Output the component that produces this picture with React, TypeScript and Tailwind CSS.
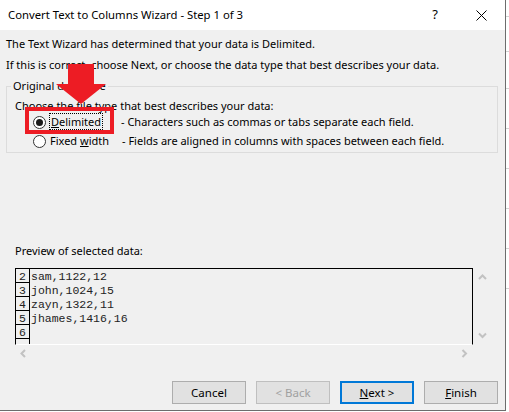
const rows = [
  { n: "2", text: "sam,1122,12" },
  { n: "3", text: "john,1024,15" },
  { n: "4", text: "zayn,1322,11" },
  { n: "5", text: "jhames,1416,16" },
  { n: "6", text: "" },
];

const Chevron = ({ dir }: { dir: "up" | "down" | "left" | "right" }) => {
  const d = {
    up: "M1 5 L4.5 1.5 L8 5",
    down: "M1 1.5 L4.5 5 L8 1.5",
    left: "M5 1 L1.5 4.5 L5 8",
    right: "M1.5 1 L5 4.5 L1.5 8",
  }[dir];
  const vertical = dir === "up" || dir === "down";
  return (
    <svg
      width={vertical ? 9 : 7}
      height={vertical ? 7 : 9}
      viewBox={vertical ? "0 0 9 7" : "0 0 7 9"}
      fill="none"
      stroke="#c2c2c2"
      strokeWidth="2"
    >
      <path d={d} />
    </svg>
  );
};

const Radio = ({ checked }: { checked?: boolean }) => (
  <span className="flex h-[13px] w-[13px] items-center justify-center rounded-full border border-[#333333] bg-white">
    {checked && <span className="h-[7px] w-[7px] rounded-full bg-[#1a1a1a]" />}
  </span>
);

const Button = ({
  children,
  disabled,
  focused,
}: {
  children: React.ReactNode;
  disabled?: boolean;
  focused?: boolean;
}) => (
  <button
    className={
      focused
        ? "flex h-[23px] w-[74px] items-center justify-center border-2 border-[#0078d7] bg-[#e1e1e1] text-[11.5px] text-[#000]"
        : disabled
          ? "flex h-[23px] w-[74px] items-center justify-center border border-[#bfbfbf] bg-[#e1e1e1] text-[11.5px] text-[#a0a0a0]"
          : "flex h-[23px] w-[74px] items-center justify-center border border-[#adadad] bg-[#e1e1e1] text-[11.5px] text-[#000]"
    }
  >
    {children}
  </button>
);

export default function App() {
  return (
    <div
      className="relative flex h-[412px] w-[509px] flex-col overflow-hidden bg-white text-[11px] text-black"
      style={{ fontFamily: '"Noto Sans", sans-serif' }}
    >
      <div className="flex">
        {/* dialog */}
        <div className="flex h-[411px] w-[506px] flex-col border-r border-b border-[#6d6d6d] bg-[#f0f0f0]">
          <div className="flex h-[30px] items-center bg-white pl-[8px]">
            <span className="text-[11.3px] leading-[16px]">Convert Text to Columns Wizard - Step 1 of 3</span>
            <span className="mr-[38px] ml-auto text-[13px]">?</span>
            <svg width="11" height="11" viewBox="0 0 11 11" className="mr-[18px]" stroke="#000" strokeWidth="1">
              <path d="M0.5 0.5 L10.5 10.5 M10.5 0.5 L0.5 10.5" />
            </svg>
          </div>

          <div className="flex flex-col px-[6px]">
            <p className="pt-[5px] leading-[18px]">The Text Wizard has determined that your data is Delimited.</p>
            <p className="mt-[3px] leading-[18px]">
              If this is correct, choose Next, or choose the data type that best describes your data.
            </p>

            <div className="relative mt-[12px] w-[492px] border border-[#dcdcdc] px-[8px] pt-[11px] pb-[3px]">
              <span className="absolute -top-[9px] left-[4px] bg-[#f0f0f0] px-[2px] leading-[16px]">
                Original data type
              </span>
              <p className="leading-[16px]">Choose the file type that best describes your data:</p>
              <div className="flex h-[16px] items-center pl-[18px]">
                <Radio checked />
                <span className="ml-[3px] w-[72px]">
                  <span className="border border-dotted border-black px-[1px] leading-[12px]">
                    <span className="underline">D</span>elimited
                  </span>
                </span>
                <span>- Characters such as commas or tabs separate each field.</span>
              </div>
              <div className="mt-[3px] flex h-[16px] items-center pl-[18px]">
                <Radio />
                <span className="ml-[4px] w-[72px]">
                  Fixed <span className="underline">w</span>idth
                </span>
                <span>- Fields are aligned in columns with spaces between each field.</span>
              </div>
            </div>

            <p className="mt-[90px] pl-[9px] leading-[16px]">Preview of selected data:</p>

            <div className="mt-[9px] ml-[9px] flex flex-col">
              <div className="flex">
                <div
                  className="h-[77px] w-[458px] overflow-hidden border-t border-r border-b border-l border-black border-b-white text-[11.5px] text-[#222]"
                  style={{ fontFamily: '"Liberation Mono", monospace' }}
                >
                  {rows.map((r) => (
                    <div key={r.n} className="flex h-[14px]">
                      <span className="h-[14px] w-[14px] border-r border-b border-black pt-[2px] text-center leading-[12px]">
                        {r.n}
                      </span>
                      <span className="pt-[2px] pl-[1px] leading-[12px]">{r.text}</span>
                    </div>
                  ))}
                  <div className="h-[10px] w-[14px] border-r border-black" />
                </div>
                <div className="flex w-[18px] flex-col items-center justify-between pt-[6px] pb-[6px]">
                  <Chevron dir="up" />
                  <Chevron dir="down" />
                </div>
              </div>
              <div className="flex h-[16px] w-[458px] items-center justify-between px-[5px]">
                <Chevron dir="left" />
                <Chevron dir="right" />
              </div>
            </div>
          </div>

          <div className="mt-auto flex justify-end gap-[10px] pr-[7px] pb-[6px]">
            <Button>Cancel</Button>
            <Button disabled>&lt; Back</Button>
            <Button focused>
              <span>
                <span className="underline">N</span>ext &gt;
              </span>
            </Button>
            <Button>
              <span>
                <span className="underline">F</span>inish
              </span>
            </Button>
          </div>
        </div>

        {/* spreadsheet behind the dialog */}
        <div className="flex flex-1 flex-col">
          <div className="h-[17px] border-b border-[#d4d4d4]" />
          <div className="h-[35px] border-b border-[#d4d4d4]" />
          <div className="h-[37px] border-b border-[#d4d4d4]" />
          <div className="h-[40px] border-b border-[#d4d4d4]" />
          <div className="h-[40px] border-b border-[#d4d4d4]" />
          <div className="h-[40px] border-b border-[#d4d4d4]" />
          <div className="h-[40px] border-b border-[#d4d4d4]" />
          <div className="h-[40px] border-b border-[#d4d4d4]" />
        </div>
      </div>

      {/* annotation overlay */}
      <div className="pointer-events-none absolute top-[107px] left-[25px] h-[27px] w-[89px] border-4 border-[#ed1c24]" />
      <svg className="pointer-events-none absolute top-[64px] left-[56px]" width="52" height="41" viewBox="0 0 52 41">
        <path d="M12 0 H38 V20 H50 L25 40 L0 20 H12 Z" fill="#ed1c24" />
      </svg>
    </div>
  );
}
